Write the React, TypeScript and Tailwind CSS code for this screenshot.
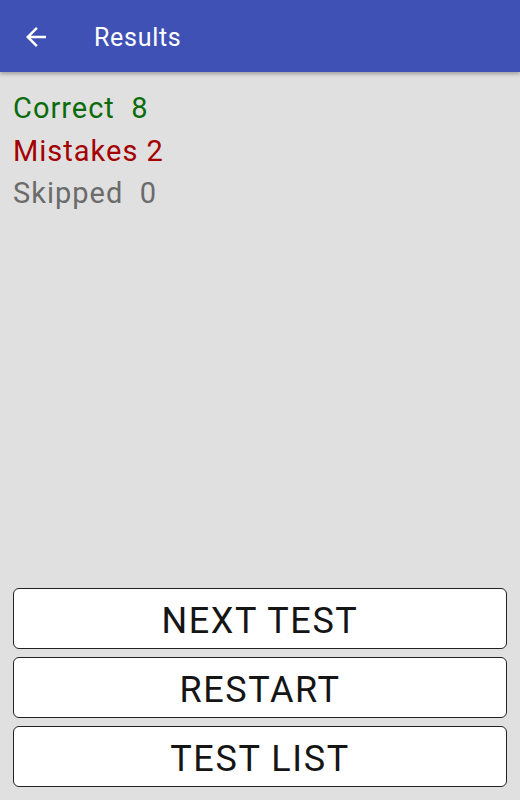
const stats = [
  { label: "Correct", value: "8", color: "text-[#0b6b0b]", gap: "\u00a0\u00a0" },
  { label: "Mistakes", value: "2", color: "text-[#a30000]", gap: " " },
  { label: "Skipped", value: "0", color: "text-[#6b6b6b]", gap: "\u00a0\u00a0" },
];

const buttons = ["NEXT TEST", "RESTART", "TEST LIST"];

function BackArrow() {
  return (
    <svg viewBox="0 0 24 24" className="w-[30px] h-[30px] fill-white">
      <path d="M20 11H7.83l5.59-5.59L12 4l-8 8 8 8 1.41-1.41L7.83 13H20v-2z" />
    </svg>
  );
}

export default function App() {
  return (
    <div className="h-[800px] w-[520px] bg-[#e0e0e0] flex flex-col font-['Roboto',sans-serif]">
      {/* Toolbar */}
      <header className="h-[72px] bg-[#3f51b5] flex items-center shadow-[0_2px_4px_rgba(0,0,0,0.3)] relative z-10">
        <div className="ml-[21px] mt-[2px]">
          <BackArrow />
        </div>
        <h1 className="text-white text-[25px] tracking-[0.7px] ml-[43px] mt-[4px]">Results</h1>
      </header>

      {/* Stats */}
      <div className="px-[13px] pt-[15px] flex-1">
        {stats.map((s) => (
          <p key={s.label} className={`text-[29px] leading-[42.5px] tracking-[1px] ${s.color}`}>
            {s.label}
            {s.gap}
            {s.value}
          </p>
        ))}
      </div>

      {/* Actions */}
      <div className="px-[13px] pb-[13px] flex flex-col gap-[8px]">
        {buttons.map((b) => (
          <button
            key={b}
            className="h-[61px] w-full bg-white border border-[#222] rounded-[6px] text-[36px] text-[#151515] tracking-[1.6px] pt-[4px]"
          >
            {b}
          </button>
        ))}
      </div>
    </div>
  );
}
